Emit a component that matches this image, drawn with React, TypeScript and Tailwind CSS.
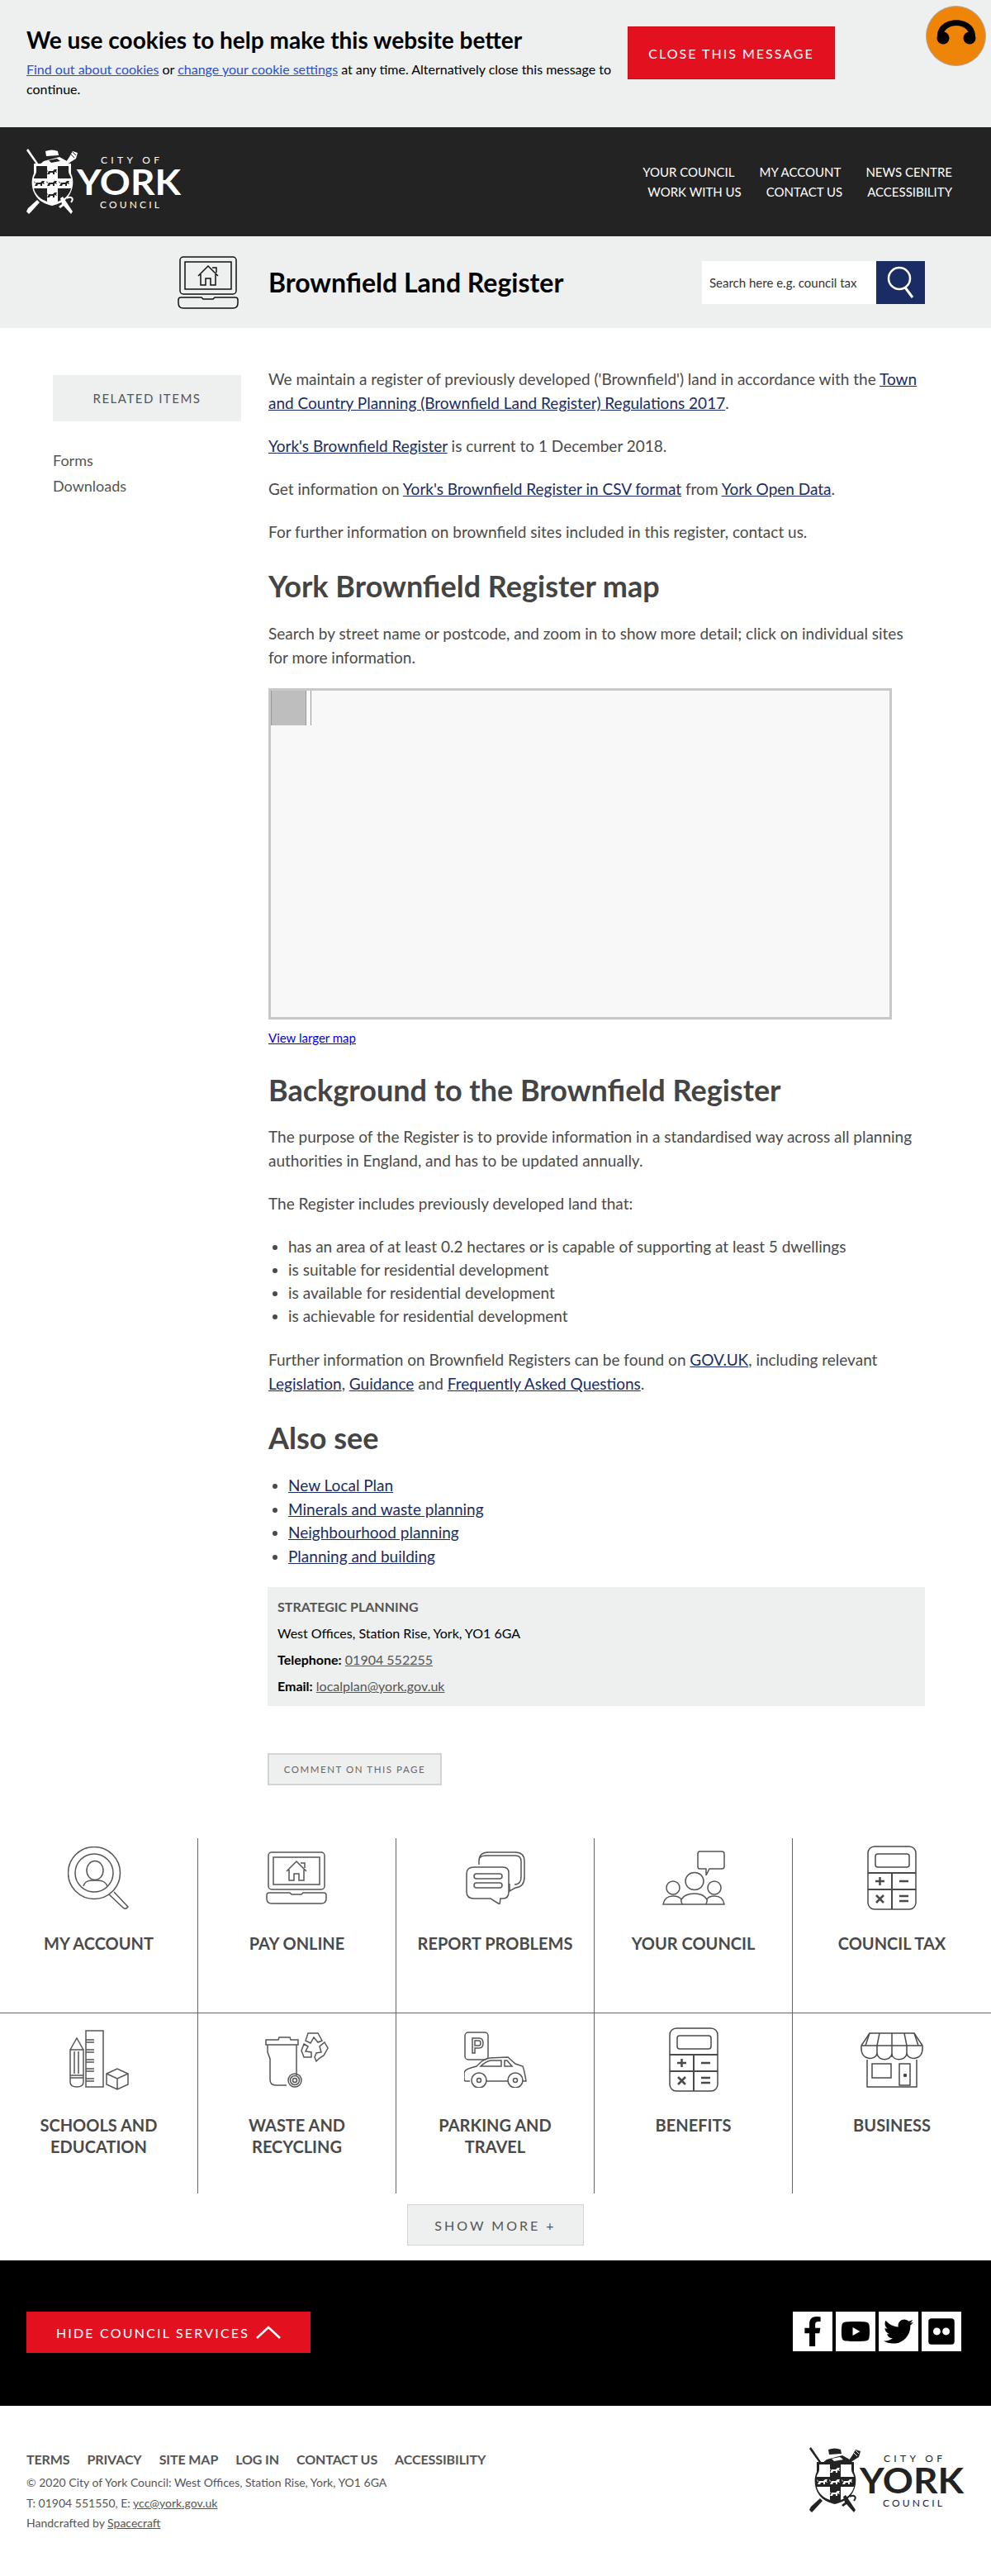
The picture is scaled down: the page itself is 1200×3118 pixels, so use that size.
import { ReactNode } from "react";
import { FaFacebookF, FaFlickr, FaTwitter, FaYoutube } from "react-icons/fa";

const font = { fontFamily: "Lato, sans-serif" };

function Lion({ x, y, fill }: { x: number; y: number; fill: string }) {
  return (
    <path
      transform={`translate(${x} ${y})`}
      fill={fill}
      d="M-6 3 L-4 -1 L1 -1 L3 -3 L6 -3 L5 -1 L6 1 L3 0 L3 3 L1 3 L1 1 L-2 1 L-3 3 L-6 3 Z M-7 -3 L-5 -1 L-6 0 Z"
    />
  );
}

function Logo({ fg, bg }: { fg: string; bg: string }) {
  return (
    <svg width="188" height="80" viewBox="0 0 188 80" className="block">
      <path d="M0 2 L15 23 L17 22 L2 0 Z" fill={fg} />
      <path d="M15 20 L21 15 L40 10 L49 15 L47 20 L24 20 Z" fill={fg} />
      <path d="M23 3 Q31 0 38 3 L39 8 L24 9 Z" fill={fg} />
      <path d="M27 14 L37 12 L41 15 L30 17 Z" fill={bg} />
      <path d="M46 19 L52 10 L56 3 L62 5 L60 12 L52 17 L48 22 Z" fill={fg} />
      <path d="M53 6 L58 11 M56 4 L60 8" stroke={bg} strokeWidth="1" />
      <path
        d="M9 18 L54 18 L54 30 C58 38 57 50 50 59 C45 65 38 67 31 69 C23 67 16 64 12 58 C6 50 5 38 9 30 Z"
        fill={fg}
      />
      <path d="M12 21 L25 21 L25 36 L9 36 C9 33 12 31 12 27 Z" fill={bg} />
      <path d="M38 21 L51 21 L51 27 C51 31 54 33 54 36 L38 36 Z" fill={bg} />
      <path d="M9 48 L25 48 L25 64 C19 62 11 57 9 48 Z" fill={bg} />
      <path d="M38 48 L54 48 C52 57 44 62 38 64 Z" fill={bg} />
      <Lion x={31} y={28} fill={bg} />
      <Lion x={16} y={42} fill={bg} />
      <Lion x={31} y={42} fill={bg} />
      <Lion x={46} y={42} fill={bg} />
      <Lion x={31} y={56} fill={bg} />
      <path d="M2 72 L13 62 L16 65 L6 76 L3 79 L0 76 Z" fill={fg} />
      <path d="M41 60 L44 58 L56 76 L54 79 L45 69 L41 72 L39 70 L43 67 Z" fill={fg} />
      <path d="M49 60 C54 57 58 60 54 65" fill="none" stroke={fg} strokeWidth="2" />
      <g fill={fg} style={font}>
        <text x="90" y="18" fontSize="12" textLength="71">CITY OF</text>
        <text x="61" y="56" fontSize="42" fontWeight="700" textLength="126" lengthAdjust="spacingAndGlyphs">YORK</text>
        <text x="89" y="72" fontSize="12" textLength="72">COUNCIL</text>
      </g>
    </svg>
  );
}

function LaptopIcon({ stroke }: { stroke: string }) {
  return (
    <svg width="75" height="64" viewBox="0 0 75 64" fill="none" stroke={stroke} strokeWidth="1.5">
      <rect x="3" y="1" width="68" height="45" rx="4" />
      <rect x="9" y="7" width="56" height="33" />
      <path d="M1 53 Q1 50 4 50 L29 50 L31 52 L43 52 L45 50 L70 50 Q73 50 73 53 L73 57 Q73 63 67 63 L7 63 Q1 63 1 57 Z" />
      <path d="M25 24 L37 12 L49 24 M28 22 L28 35 L34 35 L34 27 L40 27 L40 35 L46 35 L46 22 M42 14 L47 14 L47 20" />
    </svg>
  );
}

function AccountIcon() {
  return (
    <svg width="76" height="76" viewBox="0 0 76 76" fill="none" stroke="#555" strokeWidth="1.5">
      <circle cx="32" cy="32" r="31.5" />
      <circle cx="32" cy="32" r="23" />
      <ellipse cx="33" cy="29" rx="10" ry="11.5" />
      <path d="M19 48 C21 41 27 41 33 41 C39 41 45 41 48 48" />
      <path d="M56 55 L73 73 Q70 77 67 74 L50 58" />
    </svg>
  );
}

function ChatIcon() {
  return (
    <svg width="72" height="64" viewBox="0 0 72 64" fill="none" stroke="#555" strokeWidth="1.5">
      <path d="M16 16 L16 12 Q16 1 27 1 L60 1 Q71 1 71 12 L71 31 Q71 43 60 44 L53 48 L53 39" />
      <path d="M17 8 Q18 5 26 5 L60 5 Q67 5 67 12 L67 31 Q67 40 59 40" />
      <path d="M10 19 L45 19 Q52 19 52 26 L52 49 Q52 57 45 57 L42 57 L41 64 L30 57 L10 57 Q1 57 1 49 L1 27 Q1 19 10 19 Z" />
      <rect x="10" y="27" width="34" height="6" rx="3" />
      <rect x="10" y="38" width="34" height="6" rx="3" />
    </svg>
  );
}

function CouncilIcon() {
  return (
    <svg width="76" height="66" viewBox="0 0 76 66" fill="none" stroke="#555" strokeWidth="1.5">
      <path d="M45 1 L72 1 Q75 1 75 4 L75 19 Q75 22 72 22 L57 22 L53 30 L53 22 L45 22 Q43 22 43 19 L43 4 Q43 1 45 1 Z" />
      <ellipse cx="39" cy="37" rx="11" ry="10.5" />
      <circle cx="13" cy="45" r="8" />
      <circle cx="63" cy="45" r="8" />
      <path d="M1 65 L75 65 C74 58 70 55 63 55 C58 55 55 57 54 59 C51 54 46 52 39 52 C31 52 26 54 23 59 C21 56 17 55 13 55 C6 55 2 59 1 65 Z" />
      <path d="M23 59 C22 61 24 64 24 65 M54 59 C55 61 53 64 53 65" />
    </svg>
  );
}

function CalculatorIcon() {
  return (
    <svg width="60" height="78" viewBox="0 0 60 78" fill="none" stroke="#4a4a4a" strokeWidth="1.5">
      <rect x="1" y="1" width="58" height="76" rx="8" />
      <rect x="10" y="10" width="41" height="16" rx="3" />
      <path d="M1 33 L59 33 M1 53 L59 53 M30 33 L30 77" strokeWidth="2" />
      <path d="M10 43 L21 43 M15.5 38 L15.5 48 M39 43 L50 43 M11 60 L20 69 M20 60 L11 69 M39 61 L50 61 M39 67 L50 67" strokeWidth="2.5" />
    </svg>
  );
}

function SchoolsIcon() {
  return (
    <svg width="72" height="73" viewBox="0 0 72 73" fill="none" stroke="#555" strokeWidth="1.5">
      <path d="M1 24 L9 10 L17 24 M1 24 L17 24 L17 63 Q17 69 9 69 Q1 69 1 63 Z M1 58 L17 58 M1 55 L17 55 M6 26 L6 53 M11 26 L11 53" />
      <rect x="20" y="1" width="21" height="68" />
      <path d="M20 12 L30 12 M20 24 L30 24 M20 36 L30 36 M20 47 L30 47 M20 59 L30 59 M20 15 L30 15 M20 27 L30 27 M20 39 L30 39 M20 50 L30 50 M20 62 L30 62" />
      <path d="M45 53 L58 47 L71 53 L71 66 L58 72 L45 66 Z M45 53 L58 59 L71 53 M58 59 L58 72" />
    </svg>
  );
}

function WasteIcon() {
  return (
    <svg width="77" height="67" viewBox="0 0 77 67" fill="none" stroke="#555" strokeWidth="1.5">
      <path d="M1 9 L16 9 L17 6 L30 6 L31 9 L40 9 L40 15 L1 15 Z" />
      <path d="M3 15 L3 24 L6 32 L6 57 Q6 64 13 64 L26 64 M38 15 L38 52" />
      <circle cx="36" cy="58" r="8" />
      <circle cx="36" cy="58" r="5.5" />
      <circle cx="36" cy="58" r="2.5" />
      <path d="M52 1 L64 1 L69 10 L64 12 L59 6 L55 13 L49 10 Z M47 14 L52 17 L49 23 L56 24 L56 30 L47 30 L44 22 Z M72 12 L76 19 L71 28 L66 31 L62 35 L60 30 L62 25 L68 24 L66 17 Z" />
    </svg>
  );
}

function ParkingIcon() {
  return (
    <svg width="76" height="68" viewBox="0 0 76 68" fill="none" stroke="#555" strokeWidth="1.5">
      <rect x="1" y="1" width="28" height="33" rx="4" />
      <path d="M10 26 L10 8 L18 8 Q23 8 23 14 Q23 20 18 20 L13 20 L13 26 Z M13 11 L13 17 L18 17 Q20 17 20 14 Q20 11 18 11 Z" />
      <path d="M7 60 L2 60 Q0 60 0 56 L0 50 Q1 46 8 44 L15 42 C20 37 24 33 31 32 L53 31 L62 39 L71 42 Q73 47 75 60 L70 60 M26 60 L53 60" />
      <circle cx="18" cy="59" r="9" />
      <circle cx="18" cy="59" r="2.5" />
      <circle cx="62" cy="59" r="9" />
      <circle cx="62" cy="59" r="2.5" />
      <path d="M20 42 C24 38 28 36 32 35 L45 35 L45 42 Z M49 35 L52 35 L58 42 L49 42 Z" />
    </svg>
  );
}

function StoreIcon() {
  return (
    <svg width="76" height="67" viewBox="0 0 76 67" fill="none" stroke="#4a4a4a" strokeWidth="1.5">
      <path d="M11 1 L65 1 L75 16 L75 20 C75 34 58 34 56 26 C54 35 39 35 38 26 C36 35 22 35 20 26 C18 34 1 34 1 20 L1 16 Z" />
      <path d="M1 16 L75 16 M11 1 L6 16 M23 1 L20 16 L20 27 M38 1 L38 30 M53 1 L56 16 L56 27 M65 1 L70 16" />
      <path d="M8 33 L8 66 L68 66 L68 33" />
      <rect x="14" y="38" width="23" height="17" />
      <rect x="47" y="38" width="13" height="26" />
      <circle cx="54" cy="52" r="1.5" fill="#4a4a4a" />
    </svg>
  );
}

function TextLink({ children }: { children: ReactNode }) {
  return <a className="text-[#1a2c64] underline">{children}</a>;
}

function Heading({ className, children }: { className: string; children: ReactNode }) {
  return <h2 className={`text-[36px] leading-[44px] font-bold text-[#444] ${className}`}>{children}</h2>;
}

const services: { label: ReactNode; icon: ReactNode }[] = [
  { label: "MY ACCOUNT", icon: <AccountIcon /> },
  { label: "PAY ONLINE", icon: <LaptopIcon stroke="#555" /> },
  { label: "REPORT PROBLEMS", icon: <ChatIcon /> },
  { label: "YOUR COUNCIL", icon: <CouncilIcon /> },
  { label: "COUNCIL TAX", icon: <CalculatorIcon /> },
  { label: <>SCHOOLS AND<br />EDUCATION</>, icon: <SchoolsIcon /> },
  { label: <>WASTE AND<br />RECYCLING</>, icon: <WasteIcon /> },
  { label: <>PARKING AND<br />TRAVEL</>, icon: <ParkingIcon /> },
  { label: "BENEFITS", icon: <CalculatorIcon /> },
  { label: "BUSINESS", icon: <StoreIcon /> },
];

export default function App() {
  return (
    <div style={font} className="relative w-[1200px] bg-white text-[19px] leading-[29px] text-[#4a4a4a]">
      {/* cookie bar */}
      <div className="flex h-[154px] bg-[#eef0ef] pl-[32px]">
        <div className="w-[728px] pt-[30px] text-black">
          <h1 className="text-[28px] leading-[36px] font-bold">We use cookies to help make this website better</h1>
          <p className="mt-[6px] w-[715px] text-[16px] leading-[24px]">
            <a className="text-[#2b50c8] underline">Find out about cookies</a> or{" "}
            <a className="text-[#2b50c8] underline">change your cookie settings</a> at any time. Alternatively close
            this message to continue.
          </p>
        </div>
        <button className="mt-[32px] h-[64px] w-[251px] border border-[#c9101c] bg-[#e3111f] text-[16px] tracking-[2px] text-white">
          CLOSE THIS MESSAGE
        </button>
      </div>
      <div className="absolute top-[7px] left-[1121px] flex h-[73px] w-[73px] items-center justify-center rounded-full border border-[#aaa] bg-[#ee8408]">
        <svg width="48" height="48" viewBox="0 0 48 48" className="-mt-[2px]">
          <path d="M1 24 C2 -1 46 -1 47 24 L40 24 C38 8 10 8 8 24 Z" fill="#000" />
          <circle cx="8" cy="27" r="7.5" fill="#000" />
          <circle cx="40" cy="27" r="7.5" fill="#000" />
        </svg>
      </div>

      {/* site header */}
      <header className="flex h-[132px] items-center justify-between bg-[#232323] pr-[47px] pl-[32px] text-[15px] leading-[24px] text-white">
        <Logo fg="#fff" bg="#232323" />
        <nav className="flex flex-col items-end">
          <div className="flex gap-[30px]">
            <a>YOUR COUNCIL</a>
            <a>MY ACCOUNT</a>
            <a>NEWS CENTRE</a>
          </div>
          <div className="flex gap-[30px]">
            <a>WORK WITH US</a>
            <a>CONTACT US</a>
            <a>ACCESSIBILITY</a>
          </div>
        </nav>
      </header>

      {/* page title */}
      <div className="flex h-[111px] items-center bg-[#eef0ef] pr-[80px] pl-[215px]">
        <LaptopIcon stroke="#111" />
        <h1 className="ml-[35px] text-[32px] font-bold text-black">Brownfield Land Register</h1>
        <div className="ml-auto flex h-[52px] w-[270px] bg-white">
          <span className="flex-1 pl-[9px] text-[15px] leading-[52px] text-[#333]">Search here e.g. council tax</span>
          <span className="flex w-[59px] items-center justify-center bg-[#1a2c64]">
            <svg width="38" height="42" viewBox="0 0 38 42" fill="none" stroke="#fff" strokeWidth="2.5">
              <circle cx="17" cy="16" r="13" />
              <path d="M24 27 L33 39" strokeWidth="3" />
            </svg>
          </span>
        </div>
      </div>

      {/* content */}
      <div className="flex pl-[64px]">
        <aside className="w-[228px] pt-[57px]">
          <div className="flex h-[56px] items-center justify-center bg-[#eef0ef] text-[15px] tracking-[1.5px] text-[#555]">
            RELATED ITEMS
          </div>
          <ul className="mt-[32px] text-[18px] leading-[31px] text-[#555]">
            <li>Forms</li>
            <li>Downloads</li>
          </ul>
        </aside>
        <main className="ml-[33px] w-[795px] pt-[47px]">
          <p>
            We maintain a register of previously developed ('Brownfield') land in accordance with the{" "}
            <TextLink>Town and Country Planning (Brownfield Land Register) Regulations 2017</TextLink>.
          </p>
          <p className="mt-[23px]">
            <TextLink>York's Brownfield Register</TextLink> is current to 1 December 2018.
          </p>
          <p className="mt-[23px]">
            Get information on <TextLink>York's Brownfield Register in CSV format</TextLink> from{" "}
            <TextLink>York Open Data</TextLink>.
          </p>
          <p className="mt-[23px]">For further information on brownfield sites included in this register, contact us.</p>

          <Heading className="mt-[29px]">York Brownfield Register map</Heading>
          <p className="mt-[21px]">
            Search by street name or postcode, and zoom in to show more detail; click on individual sites for more
            information.
          </p>
          <div className="mt-[23px] h-[401px] w-[755px] border-[3px] border-[#c8c8c8] bg-[#f8f8f8]">
            <div className="flex h-[42px] items-stretch">
              <div className="w-[43px] border-x border-[#999] bg-[#bebebe]" />
              <div className="ml-[5px] w-px bg-[#999]" />
            </div>
          </div>
          <a className="mt-[12px] block text-[15px] leading-[20px] text-[#0000ee] underline">View larger map</a>

          <Heading className="mt-[31px]">Background to the Brownfield Register</Heading>
          <p className="mt-[20px]">
            The purpose of the Register is to provide information in a standardised way across all planning authorities
            in England, and has to be updated annually.
          </p>
          <p className="mt-[23px]">The Register includes previously developed land that:</p>
          <ul className="mt-[24px] list-disc pl-[24px] leading-[28px]">
            <li>has an area of at least 0.2 hectares or is capable of supporting at least 5 dwellings</li>
            <li>is suitable for residential development</li>
            <li>is available for residential development</li>
            <li>is achievable for residential development</li>
          </ul>
          <p className="mt-[24px]">
            Further information on Brownfield Registers can be found on <TextLink>GOV.UK</TextLink>, including relevant{" "}
            <TextLink>Legislation</TextLink>, <TextLink>Guidance</TextLink> and{" "}
            <TextLink>Frequently Asked Questions</TextLink>.
          </p>

          <Heading className="mt-[29px]">Also see</Heading>
          <ul className="mt-[22px] list-disc pl-[24px] leading-[28.5px]">
            <li><TextLink>New Local Plan</TextLink></li>
            <li><TextLink>Minerals and waste planning</TextLink></li>
            <li><TextLink>Neighbourhood planning</TextLink></li>
            <li><TextLink>Planning and building</TextLink></li>
          </ul>

          <div className="mt-[23px] -ml-px h-[144px] bg-[#eef0ef] px-[12px] py-[8px] text-[16px] leading-[32px] text-black">
            <p className="font-bold text-[#555]">STRATEGIC PLANNING</p>
            <p>West Offices, Station Rise, York, YO1 6GA</p>
            <p>
              <b>Telephone:</b> <a className="text-[#555] underline">01904 552255</a>
            </p>
            <p>
              <b>Email:</b> <a className="text-[#555] underline">localplan@york.gov.uk</a>
            </p>
          </div>
          <button className="mt-[57px] -ml-px block h-[39px] w-[211px] border-2 border-[#d4d4d4] bg-[#eef0ef] text-[11.5px] tracking-[1.55px] whitespace-nowrap text-[#666]">
            COMMENT ON THIS PAGE
          </button>
        </main>
      </div>

      {/* services grid */}
      <div className="mt-[64px] grid grid-cols-5">
        {services.map((service, i) => (
          <div
            key={i}
            className={`flex flex-col items-center border-[#666] ${i % 5 < 4 ? "border-r" : ""} ${
              i < 5 ? "h-[212px] border-b pt-[8px]" : "h-[218px] pt-[16px]"
            }`}
          >
            <div className="flex h-[80px] items-center justify-center">{service.icon}</div>
            <p className="mt-[26px] text-center text-[20px] leading-[26px] font-bold text-[#4a4a4a]">{service.label}</p>
          </div>
        ))}
      </div>
      <div className="mt-[13px] flex justify-center">
        <button className="h-[50px] w-[214px] border border-[#d4d4d4] bg-[#eef0ef] text-[16px] tracking-[3px] text-[#555]">
          SHOW MORE +
        </button>
      </div>

      {/* black band */}
      <div className="mt-[18px] flex h-[176px] items-start justify-between bg-black pt-[62px] pr-[36px] pl-[32px]">
        <button className="flex h-[50px] w-[344px] items-center justify-center gap-[8px] bg-[#e3111f] text-[16px] tracking-[2.2px] text-white">
          HIDE COUNCIL SERVICES
          <svg width="30" height="16" viewBox="0 0 30 16" fill="none" stroke="#fff" strokeWidth="2.5">
            <path d="M1 15 L15 2 L29 15" />
          </svg>
        </button>
        <div className="flex gap-[4px] text-[36px] text-black">
          <span className="flex h-[48px] w-[48px] items-center justify-center bg-white"><FaFacebookF /></span>
          <span className="flex h-[48px] w-[48px] items-center justify-center bg-white"><FaYoutube /></span>
          <span className="flex h-[48px] w-[48px] items-center justify-center bg-white"><FaTwitter /></span>
          <span className="flex h-[48px] w-[48px] items-center justify-center bg-white"><FaFlickr /></span>
        </div>
      </div>

      {/* footer */}
      <footer className="flex h-[206px] items-start justify-between pt-[50px] pr-[32px] pl-[32px] text-[#555]">
        <div>
          <div className="flex gap-[21px] text-[16px] leading-[30px] font-bold tracking-[-0.1px]">
            <a>TERMS</a>
            <a>PRIVACY</a>
            <a>SITE MAP</a>
            <a>LOG IN</a>
            <a>CONTACT US</a>
            <a>ACCESSIBILITY</a>
          </div>
          <div className="mt-[1px] text-[14px] leading-[24.5px]">
            <p>© 2020 City of York Council: West Offices, Station Rise, York, YO1 6GA</p>
            <p>
              T: 01904 551550, E: <a className="underline">ycc@york.gov.uk</a>
            </p>
            <p>
              Handcrafted by <a className="underline">Spacecraft</a>
            </p>
          </div>
        </div>
        <Logo fg="#232323" bg="#fff" />
      </footer>
    </div>
  );
}
